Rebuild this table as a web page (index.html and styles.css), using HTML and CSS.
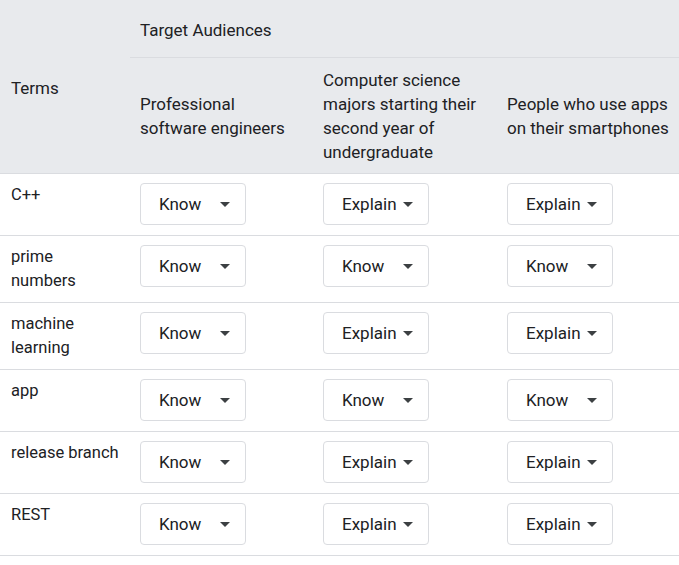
FILE: index.html
```html
<!DOCTYPE html>
<html>
<head>
<meta charset="utf-8">
<link rel="stylesheet" href="styles.css">
</head>
<body>
<table class="grid">
  <colgroup>
    <col class="c-term">
    <col class="c-a">
    <col class="c-b">
    <col class="c-c">
  </colgroup>
  <thead>
    <tr class="h1">
      <th rowspan="2" class="terms-h">Terms</th>
      <th colspan="3" class="group-h">Target Audiences</th>
    </tr>
    <tr class="h2">
      <th>Professional software engineers</th>
      <th>Computer science majors starting their second year of undergraduate</th>
      <th>People who use apps on their smartphones</th>
    </tr>
  </thead>
  <tbody>
    <tr>
      <td class="term">C++</td>
      <td><div class="sel"><span>Know</span><span class="caret"></span></div></td>
      <td><div class="sel"><span>Explain</span><span class="caret"></span></div></td>
      <td><div class="sel"><span>Explain</span><span class="caret"></span></div></td>
    </tr>
    <tr>
      <td class="term">prime<br>numbers</td>
      <td><div class="sel"><span>Know</span><span class="caret"></span></div></td>
      <td><div class="sel"><span>Know</span><span class="caret"></span></div></td>
      <td><div class="sel"><span>Know</span><span class="caret"></span></div></td>
    </tr>
    <tr>
      <td class="term">machine<br>learning</td>
      <td><div class="sel"><span>Know</span><span class="caret"></span></div></td>
      <td><div class="sel"><span>Explain</span><span class="caret"></span></div></td>
      <td><div class="sel"><span>Explain</span><span class="caret"></span></div></td>
    </tr>
    <tr>
      <td class="term">app</td>
      <td><div class="sel"><span>Know</span><span class="caret"></span></div></td>
      <td><div class="sel"><span>Know</span><span class="caret"></span></div></td>
      <td><div class="sel"><span>Know</span><span class="caret"></span></div></td>
    </tr>
    <tr>
      <td class="term">release branch</td>
      <td><div class="sel"><span>Know</span><span class="caret"></span></div></td>
      <td><div class="sel"><span>Explain</span><span class="caret"></span></div></td>
      <td><div class="sel"><span>Explain</span><span class="caret"></span></div></td>
    </tr>
    <tr>
      <td class="term">REST</td>
      <td><div class="sel"><span>Know</span><span class="caret"></span></div></td>
      <td><div class="sel"><span>Explain</span><span class="caret"></span></div></td>
      <td><div class="sel"><span>Explain</span><span class="caret"></span></div></td>
    </tr>
  </tbody>
</table>
</body>
</html>
```

FILE: styles.css
```css
html, body {
  margin: 0;
  padding: 0;
  background: #ffffff;
}
body {
  font-family: Roboto, "Liberation Sans", sans-serif;
  font-size: 16.5px;
  line-height: 24px;
  color: #202124;
}
.grid {
  width: 679px;
  table-layout: fixed;
  border-collapse: collapse;
}
.c-term { width: 130px; }
.c-a { width: 183px; }
.c-b { width: 184px; }
.c-c { width: 182px; }

thead th {
  background: #e8eaed;
  font-weight: 400;
  font-size: 17px;
  text-align: left;
  padding: 11px 10px 8px;
  vertical-align: middle;
}
thead th.terms-h {
  padding-left: 11px;
}
.h1 .group-h {
  height: 57px;
  box-sizing: border-box;
  padding: 18px 10px 15px;
  border-bottom: 1px solid #dadce0;
}
.h2 th {
  padding: 10px 10px 9px;
}
thead tr.h2 {
  border-bottom: 1px solid #dadce0;
}
tbody tr {
  border-bottom: 1px solid #dadce0;
}
tbody td {
  padding: 9px 10px;
  vertical-align: top;
}
tbody td.term {
  padding-left: 11px;
}
.sel {
  width: 106px;
  height: 42px;
  box-sizing: border-box;
  border: 1px solid #dadce0;
  border-radius: 4px;
  display: flex;
  align-items: center;
  justify-content: space-between;
  padding: 0 15px 0 18px;
  margin-bottom: 1px;
  font-size: 17px;
  color: #202124;
}
.caret {
  width: 0;
  height: 0;
  border-left: 5px solid transparent;
  border-right: 5px solid transparent;
  border-top: 5px solid #3c4043;
}
```
